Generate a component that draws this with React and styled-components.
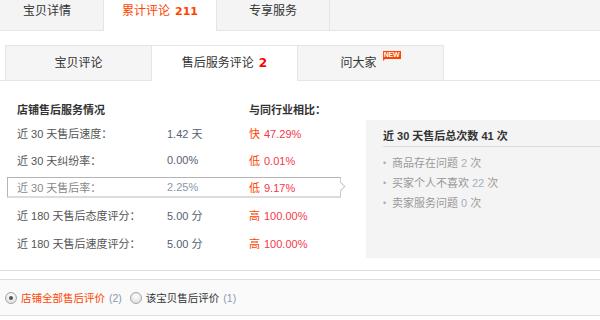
import React from 'react';
import styled, { createGlobalStyle, css } from 'styled-components';

const Global = createGlobalStyle`
  html, body { margin: 0; padding: 0; overflow: hidden; background: #fff; }
  body {
    font-family: "Liberation Sans", "Noto Sans CJK SC", sans-serif;
    font-size: 12px;
    color: #333;
    width: 600px;
    height: 320px;
  }
`;

const Page = styled.div`
  width: 600px;
  height: 320px;
  overflow: hidden;
`;

const TopBar = styled.div`
  display: flex;
  align-items: flex-start;
  height: 30px;
  background: #f4f4f4;
  border-bottom: 1px solid #e5e5e5;
`;

const TopTab = styled.div`
  flex: 0 0 113px;
  box-sizing: border-box;
  height: 30px;
  line-height: 22px;
  text-align: center;
  font-size: 12px;
  color: #333;
  border-right: 1px solid #e5e5e5;
  &:first-child { margin-left: -9px; }
  ${(p) =>
    p.$active &&
    css`
      background: #fff;
      height: 31px;
      color: #f40;
    `}
`;

const TopCount = styled.b`
  margin-left: 5px;
  font-family: "DejaVu Sans", sans-serif;
  font-size: 11px;
  color: #f40;
`;

const SubBar = styled.div`
  display: flex;
  align-items: flex-start;
  margin-top: 14px;
  padding-left: 5px;
  height: 35px;
  border-bottom: 1px solid #e5e5e5;
`;

const SubTab = styled.div`
  flex: 0 0 147px;
  box-sizing: border-box;
  height: 35px;
  line-height: 34px;
  text-align: center;
  font-size: 12px;
  color: #333;
  background: #f5f5f5;
  border: 1px solid #e5e5e5;
  border-bottom: none;
  & + & { margin-left: -1px; }
  ${(p) =>
    p.$active &&
    css`
      background: #fff;
      height: 36px;
    `}
`;

const SubCount = styled.b`
  margin-left: 5px;
  font-family: "DejaVu Sans", sans-serif;
  font-size: 12px;
  color: #f00;
`;

const BadgeHolder = styled.span`
  position: relative;
  display: inline-block;
  line-height: 14px;
  padding-right: 24px;
`;

const NewBadge = styled.span`
  position: absolute;
  top: -5px;
  right: 0;
  width: 18px;
  height: 8px;
  background: #f40;
  color: #fff;
  font-family: "Liberation Sans", sans-serif;
  font-weight: bold;
  font-size: 7px;
  line-height: 8px;
  text-align: center;
  letter-spacing: -0.2px;
  &::after {
    content: "";
    position: absolute;
    left: 0;
    bottom: -2px;
    border-top: 2px solid #f40;
    border-right: 2px solid transparent;
  }
`;

const Content = styled.div`
  display: flex;
  align-items: flex-start;
  padding-bottom: 12px;
  border-bottom: 1px solid #dedede;
`;

const Stats = styled.div`
  flex: 0 0 334px;
  margin-left: 7px;
  padding-top: 20px;
`;

const Cols = css`
  display: grid;
  grid-template-columns: 150px 82px 1fr;
  align-items: center;
`;

const StatsHead = styled.div`
  ${Cols};
  padding-left: 10px;
  height: 18px;
  line-height: 18px;
  font-size: 11px;
  font-weight: bold;
  color: #333;
`;

const Row = styled.div`
  height: 27.5px;
  display: flex;
  align-items: center;
`;

const RowBox = styled.div`
  ${Cols};
  position: relative;
  flex: 1;
  box-sizing: border-box;
  height: 20px;
  padding-left: 9px;
  font-size: 11px;
  border: 1px solid transparent;
  color: #555;
  ${(p) =>
    p.$active &&
    css`
      height: 21px;
      color: #888;
      border-color: #b4b4b4 #c8c8c8 #dcdcdc #b4b4b4;
      border-bottom-width: 2px;
      &::after {
        content: "";
        position: absolute;
        right: -4px;
        top: 50%;
        width: 6px;
        height: 6px;
        margin-top: -4px;
        background: #fff;
        border-top: 1px solid #c8c8c8;
        border-right: 1px solid #c8c8c8;
        transform: rotate(45deg);
      }
    `}
`;

const Value = styled.span`
  color: ${(p) => (p.$active ? '#8a96a8' : '#556070')};
`;

const Compare = styled.span`
  color: #f40;
`;

const CompareNum = styled.span`
  margin-left: 4px;
  color: #f5374a;
`;

const Panel = styled.div`
  flex: 1;
  margin-left: 25px;
  margin-top: 39px;
  height: 138px;
  background: #f4f4f4;
  padding-left: 17px;
`;

const PanelTitle = styled.div`
  padding-top: 6px;
  line-height: 20px;
  font-size: 11px;
  font-weight: bold;
  color: #333;
  border-bottom: 1px solid #dcdcdc;
`;

const List = styled.ul`
  list-style: none;
  margin: 6px 0 0;
  padding: 0;
`;

const Item = styled.li`
  display: flex;
  align-items: center;
  line-height: 20px;
  font-size: 11px;
  color: #999;
`;

const Dot = styled.span`
  flex: 0 0 9px;
  font-size: 9px;
  color: #aaa;
`;

const Num = styled.span`
  margin: 0 3px;
  color: #9fb1c6;
`;

const FilterBar = styled.div`
  display: flex;
  align-items: center;
  gap: 8px;
  margin-top: 8px;
  height: 35px;
  padding-left: 5px;
  background: #fafafa;
  border-top: 1px solid #dedede;
  border-bottom: 1px solid #dedede;
`;

const Option = styled.label`
  display: flex;
  align-items: center;
  font-size: 10.5px;
  color: ${(p) => (p.$checked ? '#f40' : '#333')};
`;

const Radio = styled.span`
  position: relative;
  box-sizing: border-box;
  width: 12px;
  height: 12px;
  margin-right: 4px;
  border-radius: 50%;
  border: 1px solid #a6a6a6;
  background: radial-gradient(circle at 50% 35%, #ffffff 0%, #e4e4e4 70%, #d0d0d0 100%);
  ${(p) =>
    p.$checked &&
    css`
      &::after {
        content: "";
        position: absolute;
        left: 3px;
        top: 3px;
        width: 4px;
        height: 4px;
        border-radius: 50%;
        background: #555;
      }
    `}
`;

const OptCount = styled.span`
  margin-left: 4px;
  color: #8a9ab0;
`;

const rows = [
  { label: '近 30 天售后速度：', value: '1.42 天', word: '快', pct: '47.29%' },
  { label: '近 30 天纠纷率：', value: '0.00%', word: '低', pct: '0.01%' },
  { label: '近 30 天售后率：', value: '2.25%', word: '低', pct: '9.17%', active: true },
  { label: '近 180 天售后态度评分：', value: '5.00 分', word: '高', pct: '100.00%' },
  { label: '近 180 天售后速度评分：', value: '5.00 分', word: '高', pct: '100.00%' },
];

const reasons = [
  { text: '商品存在问题', n: '2' },
  { text: '买家个人不喜欢', n: '22' },
  { text: '卖家服务问题', n: '0' },
];

export default function App() {
  return (
    <Page>
      <Global />
      <TopBar>
        <TopTab>宝贝详情</TopTab>
        <TopTab $active>
          累计评论<TopCount>211</TopCount>
        </TopTab>
        <TopTab>专享服务</TopTab>
      </TopBar>

      <SubBar>
        <SubTab>宝贝评论</SubTab>
        <SubTab $active>
          售后服务评论<SubCount>2</SubCount>
        </SubTab>
        <SubTab>
          <BadgeHolder>
            问大家
            <NewBadge>NEW</NewBadge>
          </BadgeHolder>
        </SubTab>
      </SubBar>

      <Content>
        <Stats>
          <StatsHead>
            <span>店铺售后服务情况</span>
            <span />
            <span>与同行业相比：</span>
          </StatsHead>
          {rows.map((r) => (
            <Row key={r.label}>
              <RowBox $active={r.active}>
                <span>{r.label}</span>
                <Value $active={r.active}>{r.value}</Value>
                <span>
                  <Compare>{r.word}</Compare>
                  <CompareNum>{r.pct}</CompareNum>
                </span>
              </RowBox>
            </Row>
          ))}
        </Stats>
        <Panel>
          <PanelTitle>近 30 天售后总次数 41 次</PanelTitle>
          <List>
            {reasons.map((r) => (
              <Item key={r.text}>
                <Dot>•</Dot>
                {r.text}
                <Num>{r.n}</Num>次
              </Item>
            ))}
          </List>
        </Panel>
      </Content>

      <FilterBar>
        <Option $checked>
          <Radio $checked />
          店铺全部售后评价<OptCount>(2)</OptCount>
        </Option>
        <Option>
          <Radio />
          该宝贝售后评价<OptCount>(1)</OptCount>
        </Option>
      </FilterBar>
    </Page>
  );
}
